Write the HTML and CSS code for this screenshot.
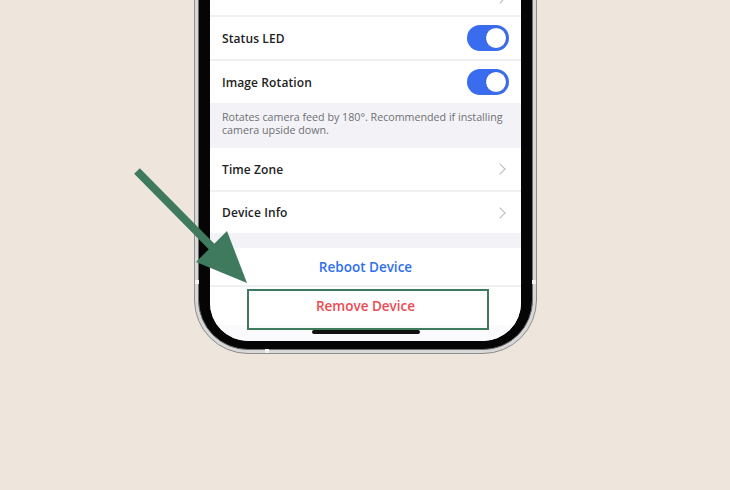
FILE: index.html
```html
<!DOCTYPE html>
<html>
<head>
<meta charset="utf-8">
<link rel="stylesheet" href="styles.css">
</head>
<body>
<div class="stage">
  <div class="phone">
    <span class="band band-left"></span>
    <span class="band band-right"></span>
    <span class="band band-bottom"></span>
    <div class="bezel">
      <div class="screen">
        <div class="row row-top"><span class="chev"></span></div>
        <div class="sep"></div>
        <div class="row"><span class="label">Status LED</span><span class="toggle"><span class="knob"></span></span></div>
        <div class="sep"></div>
        <div class="row"><span class="label">Image Rotation</span><span class="toggle"><span class="knob"></span></span></div>
        <div class="note">Rotates camera feed by 180°. Recommended if installing camera upside down.</div>
        <div class="row"><span class="label">Time Zone</span><span class="chev"></span></div>
        <div class="sep"></div>
        <div class="row row-b"><span class="label">Device Info</span><span class="chev"></span></div>
        <div class="gap"></div>
        <div class="action action-blue">Reboot Device</div>
        <div class="sep"></div>
        <div class="action action-red">Remove Device</div>
        <div class="bottom"><span class="home"></span></div>
      </div>
    </div>
  </div>
  <div class="highlight"></div>
  <svg class="arrow" width="730" height="490" viewBox="0 0 730 490">
    <line x1="137" y1="171" x2="214" y2="249" stroke="#3f7a5e" stroke-width="8"/>
    <polygon points="247,283 227,231 196,262" fill="#3f7a5e"/>
  </svg>
</div>
</body>
</html>
```
FILE: styles.css
```css
html, body {
  margin: 0;
  padding: 0;
}
body {
  background: #eee5dd;
  width: 730px;
  height: 490px;
  overflow: hidden;
  font-family: "Open Sans", "Liberation Sans", sans-serif;
}
.stage {
  position: relative;
  display: flow-root;
  width: 730px;
  height: 490px;
}
.phone {
  position: relative;
  margin-left: 194px;
  margin-top: -30px;
  width: 343px;
  height: 384px;
  box-sizing: border-box;
  background: #d8d8d8;
  border: 1px solid #8c8c8c;
  border-radius: 0 0 54px 54px;
  padding: 0 3px 3px 3px;
}
.band {
  position: absolute;
  background: #f2f2f2;
}
.band-left { left: 0; top: 309px; width: 4px; height: 4px; }
.band-right { right: 0; top: 309px; width: 4px; height: 4px; }
.band-bottom { bottom: 0; left: 70px; width: 4px; height: 4px; }
.bezel {
  height: 100%;
  box-sizing: border-box;
  background: #050505;
  border: 1px solid #6f6f6f;
  border-radius: 0 0 50px 50px;
  padding: 0 11px 8px 11px;
}
.screen {
  height: 100%;
  background: #fafafc;
  border-radius: 0 0 38px 38px;
  overflow: hidden;
  display: flex;
  flex-direction: column;
}
.row {
  height: 42px;
  flex: none;
  background: #fff;
  display: flex;
  align-items: center;
  justify-content: space-between;
  padding: 0 12px 0 12px;
}
.row-top {
  height: 43px;
  justify-content: flex-end;
  align-items: flex-start;
  padding-top: 22px;
  box-sizing: border-box;
}
.row-b {
  height: 41px;
}
.label {
  font-size: 12px;
  font-weight: 600;
  color: #222;
  letter-spacing: 0.1px;
}
.sep {
  height: 2px;
  flex: none;
  background: #f0f0f3;
}
.toggle {
  width: 42px;
  height: 26px;
  border-radius: 13px;
  background: #3a6cf0;
  display: flex;
  align-items: center;
  justify-content: flex-end;
  padding: 0 2px;
  box-sizing: border-box;
}
.knob {
  width: 20px;
  height: 20px;
  border-radius: 50%;
  background: #fff;
  border: 1px solid #2f5fd8;
}
.chev {
  width: 7px;
  height: 7px;
  border-right: 1.3px solid #b9b9bf;
  border-top: 1.3px solid #b9b9bf;
  transform: rotate(45deg);
  margin-right: 5px;
}
.note {
  height: 45px;
  flex: none;
  box-sizing: border-box;
  background: #f3f3f7;
  padding: 8px 12px 0 12px;
  font-size: 10.7px;
  line-height: 13px;
  color: #6f6f75;
}
.gap {
  height: 15px;
  flex: none;
  background: #f3f3f7;
}
.action {
  flex: none;
  background: #fff;
  display: flex;
  align-items: center;
  justify-content: center;
  font-size: 13.5px;
  font-weight: 600;
}
.action-blue {
  height: 37px;
  color: #2f6ff0;
}
.action-red {
  height: 38px;
  color: #ec4b53;
}
.bottom {
  flex: 1;
  background: #fafafc;
  display: flex;
  align-items: flex-end;
  justify-content: center;
  padding-bottom: 7px;
  box-sizing: border-box;
}
.home {
  width: 108px;
  height: 4px;
  border-radius: 2px;
  background: #111;
}
.highlight {
  position: absolute;
  left: 247px;
  top: 289px;
  width: 242px;
  height: 41px;
  box-sizing: border-box;
  border: 2px solid #3f7a5e;
}
.arrow {
  position: absolute;
  left: 0;
  top: 0;
}
```
